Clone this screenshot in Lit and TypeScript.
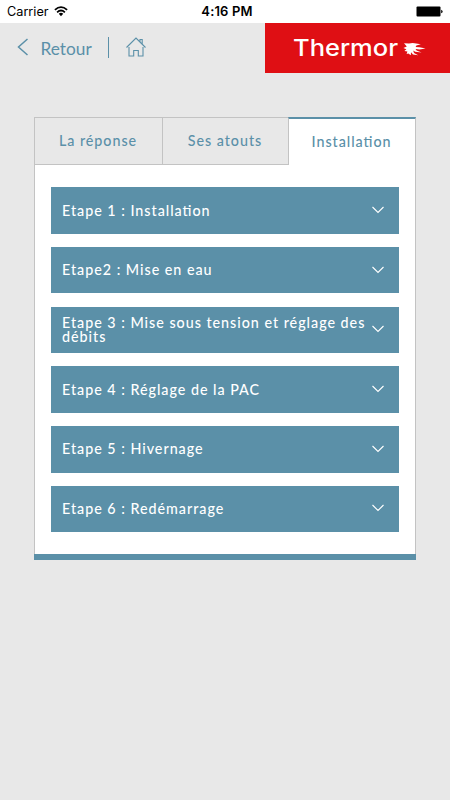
import { LitElement, html, css } from "lit";
import { customElement, state } from "lit/decorators.js";

@customElement("app-root")
export class AppRoot extends LitElement {
  @state() private active = 2;

  private tabs = ["La réponse", "Ses atouts", "Installation"];
  private steps = [
    "Etape 1 : Installation",
    "Etape2 : Mise en eau",
    "Etape 3 : Mise sous tension et réglage des débits",
    "Etape 4 : Réglage de la PAC",
    "Etape 5 : Hivernage",
    "Etape 6 : Redémarrage",
  ];

  static styles = css`
    :host {
      display: block;
      box-sizing: border-box;
      height: 800px;
      background: #e8e8e8;
      font-family: Lato, "Liberation Sans", sans-serif;
      color: #5b90a8;
      overflow: hidden;
    }
    * {
      box-sizing: border-box;
    }
    svg {
      display: block;
      flex: none;
    }
    .status {
      display: grid;
      grid-template-columns: 1fr auto 1fr;
      align-items: center;
      height: 23px;
      padding: 0 7px;
      background: #fff;
      color: #000;
      font: 12.7px/23px Inter, sans-serif;
    }
    .carrier {
      display: flex;
      align-items: center;
      gap: 5px;
    }
    .time {
      font-weight: 600;
      font-size: 13px;
      letter-spacing: 0.15px;
      padding-left: 4px;
    }
    .battery {
      justify-self: end;
    }
    .header {
      display: flex;
      height: 50px;
      justify-content: space-between;
    }
    .nav {
      display: flex;
      height: 48px;
      padding-left: 17px;
      align-items: center;
    }
    .back {
      margin: 3px 0 0 11.5px;
      font-size: 17.3px;
      line-height: 22px;
    }
    .sep {
      width: 1px;
      height: 21px;
      margin: 0 17px 0 16.5px;
      background: #5b90a8;
    }
    .brand {
      width: 185px;
      background: #df0f14;
    }
    .word {
      font-family: Inter, sans-serif;
      font-weight: 500;
      font-size: 22.5px;
      fill: #fff;
    }
    .card {
      width: 382px;
      margin: 44px 0 0 34px;
    }
    .tabs {
      display: grid;
      grid-template-columns: 128px 126px 128px;
      height: 48px;
    }
    .tab {
      display: flex;
      align-items: center;
      justify-content: center;
      border: 1px solid #c3c3c3;
      border-right-width: 0;
      padding: 0 1px 1px 0;
      font-size: 14.3px;
      font-weight: 500;
      letter-spacing: 0.96px;
      font-feature-settings: "liga" 1;
      cursor: pointer;
    }
    .tab.active {
      border-top: 2px solid #5b90a8;
      border-bottom: 0;
      border-right-width: 1px;
      background: #fff;
    }
    .panel {
      display: flex;
      flex-direction: column;
      gap: 13.2px;
      height: 389.3px;
      padding: 22.3px 16px 0;
      background: #fff;
      border: 1px solid #c3c3c3;
      border-top: 0;
      border-bottom: 0;
    }
    .foot {
      height: 5.5px;
      background: #5b90a8;
    }
    .step {
      display: flex;
      align-items: center;
      justify-content: space-between;
      height: 46.5px;
      flex: none;
      padding: 0 15px 0 11px;
      background: #5b90a8;
      color: #fff;
      font-size: 14.3px;
      line-height: 14px;
      font-weight: 500;
      letter-spacing: 0.98px;
      font-feature-settings: "liga" 1;
    }
    .label {
      width: 309px;
      flex: none;
      padding-top: 0.3px;
    }
    .chevron {
      margin-bottom: 1px;
    }
  `;

  render() {
    return html`
      <div class="status">
        <div class="carrier">
          <span>Carrier</span>
          <svg width="14" height="11" viewBox="0 0 14 11" fill="none" stroke="#000" stroke-width="1.8">
            <path d="M0.9 3.9Q7 -1.6 13.1 3.9M3.1 6.3Q7 2.8 10.9 6.3" />
            <path d="M4.8 7.7Q7 6 9.2 7.7L7 10.2Z" fill="#000" stroke="none" />
          </svg>
        </div>
        <span class="time">4:16 PM</span>
        <svg class="battery" width="27" height="12" viewBox="0 0 27 12">
          <rect x="0.5" y="0.5" width="24" height="10" rx="1" />
          <path d="M25.2 3.7Q26.6 4.1 26.6 5.5T25.2 7.3Z" />
        </svg>
      </div>
      <div class="header">
        <div class="nav">
          <svg width="12" height="18" viewBox="0 0 12 18" fill="none" stroke="#5b90a8" stroke-width="1.5">
            <path d="M10.5 1L1.5 9L10.5 17" />
          </svg>
          <span class="back">Retour</span>
          <span class="sep"></span>
          <svg width="20" height="20" viewBox="0 0 20 20" fill="none" stroke="#5b90a8" stroke-width="1.1">
            <path d="M0.5 10.5L10 1L19.5 10.5M14 5V2.5H16.2V7.2" />
            <path d="M3 10V19H7.7V13.5H12.3V19H17V10" />
          </svg>
        </div>
        <div class="brand">
          <svg width="185" height="50" viewBox="0 0 185 50">
            <text class="word" x="28" y="32.7" textLength="105" lengthAdjust="spacingAndGlyphs">Thermor</text>
            <path
              fill="#fff"
              d="M139 20.2L144 20.6Q147 19.6 149.5 20.2L155.8 21.2L151.4 22.6L150.6 24L154.5 24.2L160.5 25.6L154.5 26.6L150.5 26L151.6 27.4L156.6 29.4L150.2 28.8L148.2 27.6L149 30L153.2 32.3L148 31.4L146 29.2L145.8 32.2L143.4 30.6L141.6 31L142.4 28.6L139.4 28L141.4 26.2L138.4 25L141.8 23.4Z"
            />
          </svg>
        </div>
      </div>
      <div class="card">
        <div class="tabs">
          ${this.tabs.map(
            (t, i) => html`<div
              class="tab ${i === this.active ? "active" : ""}"
              @click=${() => (this.active = i)}
            >
              ${t}
            </div>`
          )}
        </div>
        <div class="panel">
          ${this.steps.map(
            (s) => html`<div class="step">
              <span class="label">${s}</span>
              <svg class="chevron" width="12" height="8" viewBox="0 0 12 8" fill="none" stroke="#fff" stroke-width="1.1">
                <path d="M0.5 1L6 6.5L11.5 1" />
              </svg>
            </div>`
          )}
        </div>
        <div class="foot"></div>
      </div>
    `;
  }
}
